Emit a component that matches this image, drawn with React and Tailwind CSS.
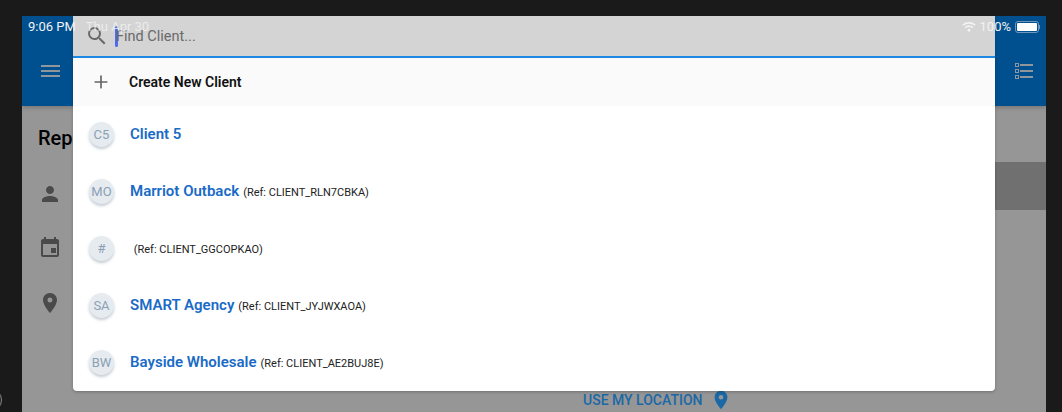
import { Plus } from "lucide-react";

const clients = [
  { initials: "C5", name: "Client 5", ref: "" },
  { initials: "MO", name: "Marriot Outback", ref: "(Ref: CLIENT_RLN7CBKA)" },
  { initials: "#", name: "", ref: "(Ref: CLIENT_GGCOPKAO)" },
  { initials: "SA", name: "SMART Agency", ref: "(Ref: CLIENT_JYJWXAOA)" },
  { initials: "BW", name: "Bayside Wholesale", ref: "(Ref: CLIENT_AE2BUJ8E)" },
];

function Pin({ className }) {
  return (
    <svg viewBox="0 0 24 24" className={className} fill="currentColor">
      <path
        fillRule="evenodd"
        d="M12 2C8.13 2 5 5.13 5 9c0 5.25 7 13 7 13s7-7.75 7-13c0-3.87-3.13-7-7-7zm0 9.5a2.5 2.5 0 1 1 0-5 2.5 2.5 0 0 1 0 5z"
      />
    </svg>
  );
}

function PersonIcon() {
  return (
    <svg viewBox="0 0 24 24" className="w-6 h-6" fill="currentColor">
      <path d="M12 12c2.21 0 4-1.79 4-4s-1.79-4-4-4-4 1.79-4 4 1.79 4 4 4zm0 2c-2.67 0-8 1.34-8 4v2h16v-2c0-2.66-5.33-4-8-4z" />
    </svg>
  );
}

function CalendarIcon() {
  return (
    <svg viewBox="0 0 24 24" className="w-6 h-6" fill="currentColor">
      <path d="M19 4h-1V2h-2v2H8V2H6v2H5c-1.11 0-2 .9-2 2v14c0 1.1.89 2 2 2h14c1.1 0 2-.9 2-2V6c0-1.1-.9-2-2-2zm0 16H5V9h14v11zm-6-7h5v5h-5v-5z" />
    </svg>
  );
}

function SearchIcon() {
  return (
    <svg viewBox="0 0 24 24" className="w-6 h-6" fill="currentColor">
      <path d="M15.5 14h-.79l-.28-.27A6.47 6.47 0 0 0 16 9.5 6.5 6.5 0 1 0 9.5 16c1.61 0 3.09-.59 4.23-1.57l.27.28v.79l5 4.99L20.49 19l-4.99-5zm-6 0C7.01 14 5 11.99 5 9.5S7.01 5 9.5 5 14 7.01 14 9.5 11.99 14 9.5 14z" />
    </svg>
  );
}

function MenuIcon() {
  return (
    <svg viewBox="0 0 19 12" className="w-[19px] h-[12px]" fill="currentColor">
      <rect y="0" width="19" height="2" />
      <rect y="5" width="19" height="2" />
      <rect y="10" width="19" height="2" />
    </svg>
  );
}

function ListIcon() {
  return (
    <svg viewBox="0 0 18 16" className="w-[18px] h-4" fill="none" stroke="currentColor">
      <rect x="0.5" y="0.5" width="3" height="3" />
      <rect x="0.5" y="6.5" width="3" height="3" />
      <rect x="0.5" y="12.5" width="3" height="3" />
      <path d="M5 2h13M5 8h13M5 14h13" strokeWidth="2" />
    </svg>
  );
}

function Wifi() {
  return (
    <svg viewBox="0 0 16 12" className="w-[14px] h-[11px]" fill="none" stroke="currentColor" strokeWidth="2">
      <path d="M1 4.4c3.8-3.4 10.2-3.4 14 0" />
      <path d="M3.6 7.2c2.4-2 6.4-2 8.8 0" />
      <circle cx="8" cy="10.3" r="1.6" fill="currentColor" stroke="none" />
    </svg>
  );
}

function ClientRow({ client }) {
  return (
    <div className="h-[57px] flex items-center pl-[16px]">
      <div className="w-[25px] h-[25px] rounded-full bg-[#e6ebf0] shadow-[0_2px_3px_rgba(90,110,130,0.35)] flex items-center justify-center text-[13px] text-[#8aa0b5]">
        {client.initials}
      </div>
      <div className="ml-[16px] flex items-baseline">
        <span className="text-[15px] font-semibold text-[#1a6bc6]">{client.name || "\u00a0"}</span>
        <span className={client.name ? "ml-[4px] text-[11px] text-[#222]" : "text-[11px] text-[#222]"}>{client.ref}</span>
      </div>
    </div>
  );
}

export default function App() {
  return (
    <div className="relative w-[1062px] h-[412px] overflow-hidden bg-[#1a1a1a] pt-4 pl-[22px] pr-4 font-['Roboto',sans-serif]">
      {/* edge of the round button, mostly cut off */}
      <div className="absolute left-[-22px] top-[388px] w-[24px] h-[24px] rounded-full border border-[#8a8a8a]" />

      <div className="relative w-[1024px] h-[396px] overflow-hidden bg-[#969696]">
        {/* app behind the dialog */}
        <div className="relative h-[90px] bg-[#00508f] shadow-[0_2px_4px_rgba(0,0,0,0.2)] flex items-center justify-between pl-[19px] pr-[13px] pt-[20px] text-[#8f969c]">
          <MenuIcon />
          <ListIcon />
        </div>
        <div className="h-[56px] flex items-center pl-[16px] pt-2 text-[20px] font-medium text-black">Report</div>
        <div className="h-[48px] ml-[60px] bg-[#707070]" />
        <div className="flex flex-col pl-[16px] -mt-[28px] gap-[29px] text-[#4a4a4a]">
          <PersonIcon />
          <CalendarIcon />
          <div className="mt-[3px]">
            <Pin className="w-6 h-6" />
          </div>
        </div>
        <div className="absolute left-[561px] top-[373px] flex items-center gap-[7px] text-[14px] font-medium text-[#1b68a6]">
          USE MY LOCATION
          <Pin className="w-[22px] h-[22px]" />
        </div>

        {/* client picker */}
        <div className="absolute left-[51px] top-0 w-[922px] h-[375px] rounded-b-[4px] overflow-hidden bg-white shadow-[0_1px_3px_rgba(0,0,0,0.25)]">
          <div className="h-[42px] bg-[#d4d4d4] border-b-2 border-[#1e88e5] flex items-center pl-[12px] text-[#6a6a6a]">
            <SearchIcon />
            <div className="ml-[6px] w-[3px] h-[21px] rounded-sm bg-[#4f6bed]" />
            <span className="text-[14.5px] ml-[-2px] pt-[2px]">Find Client...</span>
          </div>
          <div className="h-[48px] bg-[#fafafa] flex items-center pl-[18px]">
            <Plus className="w-[20px] h-[20px] text-[#666]" strokeWidth={2} />
            <span className="ml-[18px] text-[14px] font-semibold text-[#111]">Create New Client</span>
          </div>
          {clients.map((client) => (
            <ClientRow key={client.ref || client.name} client={client} />
          ))}
        </div>

        {/* status bar */}
        <div className="absolute inset-x-0 top-0 h-[21px] flex items-center justify-between pl-[6px] pr-[6px] text-[13px] text-[#f2f2f2]">
          <div className="flex gap-[10px]">
            <span>9:06 PM</span>
            <span className="opacity-80">Thu Apr 30</span>
          </div>
          <div className="flex items-center gap-[4px]">
            <Wifi />
            <span>100%</span>
            <div className="flex items-center">
              <div className="w-[24px] h-[12px] rounded-[3px] border border-[#6f97bd] p-[1px]">
                <div className="w-full h-full rounded-[1px] bg-white" />
              </div>
              <div className="w-[1px] h-[4px] bg-[#6f97bd]" />
            </div>
          </div>
        </div>
      </div>
    </div>
  );
}
